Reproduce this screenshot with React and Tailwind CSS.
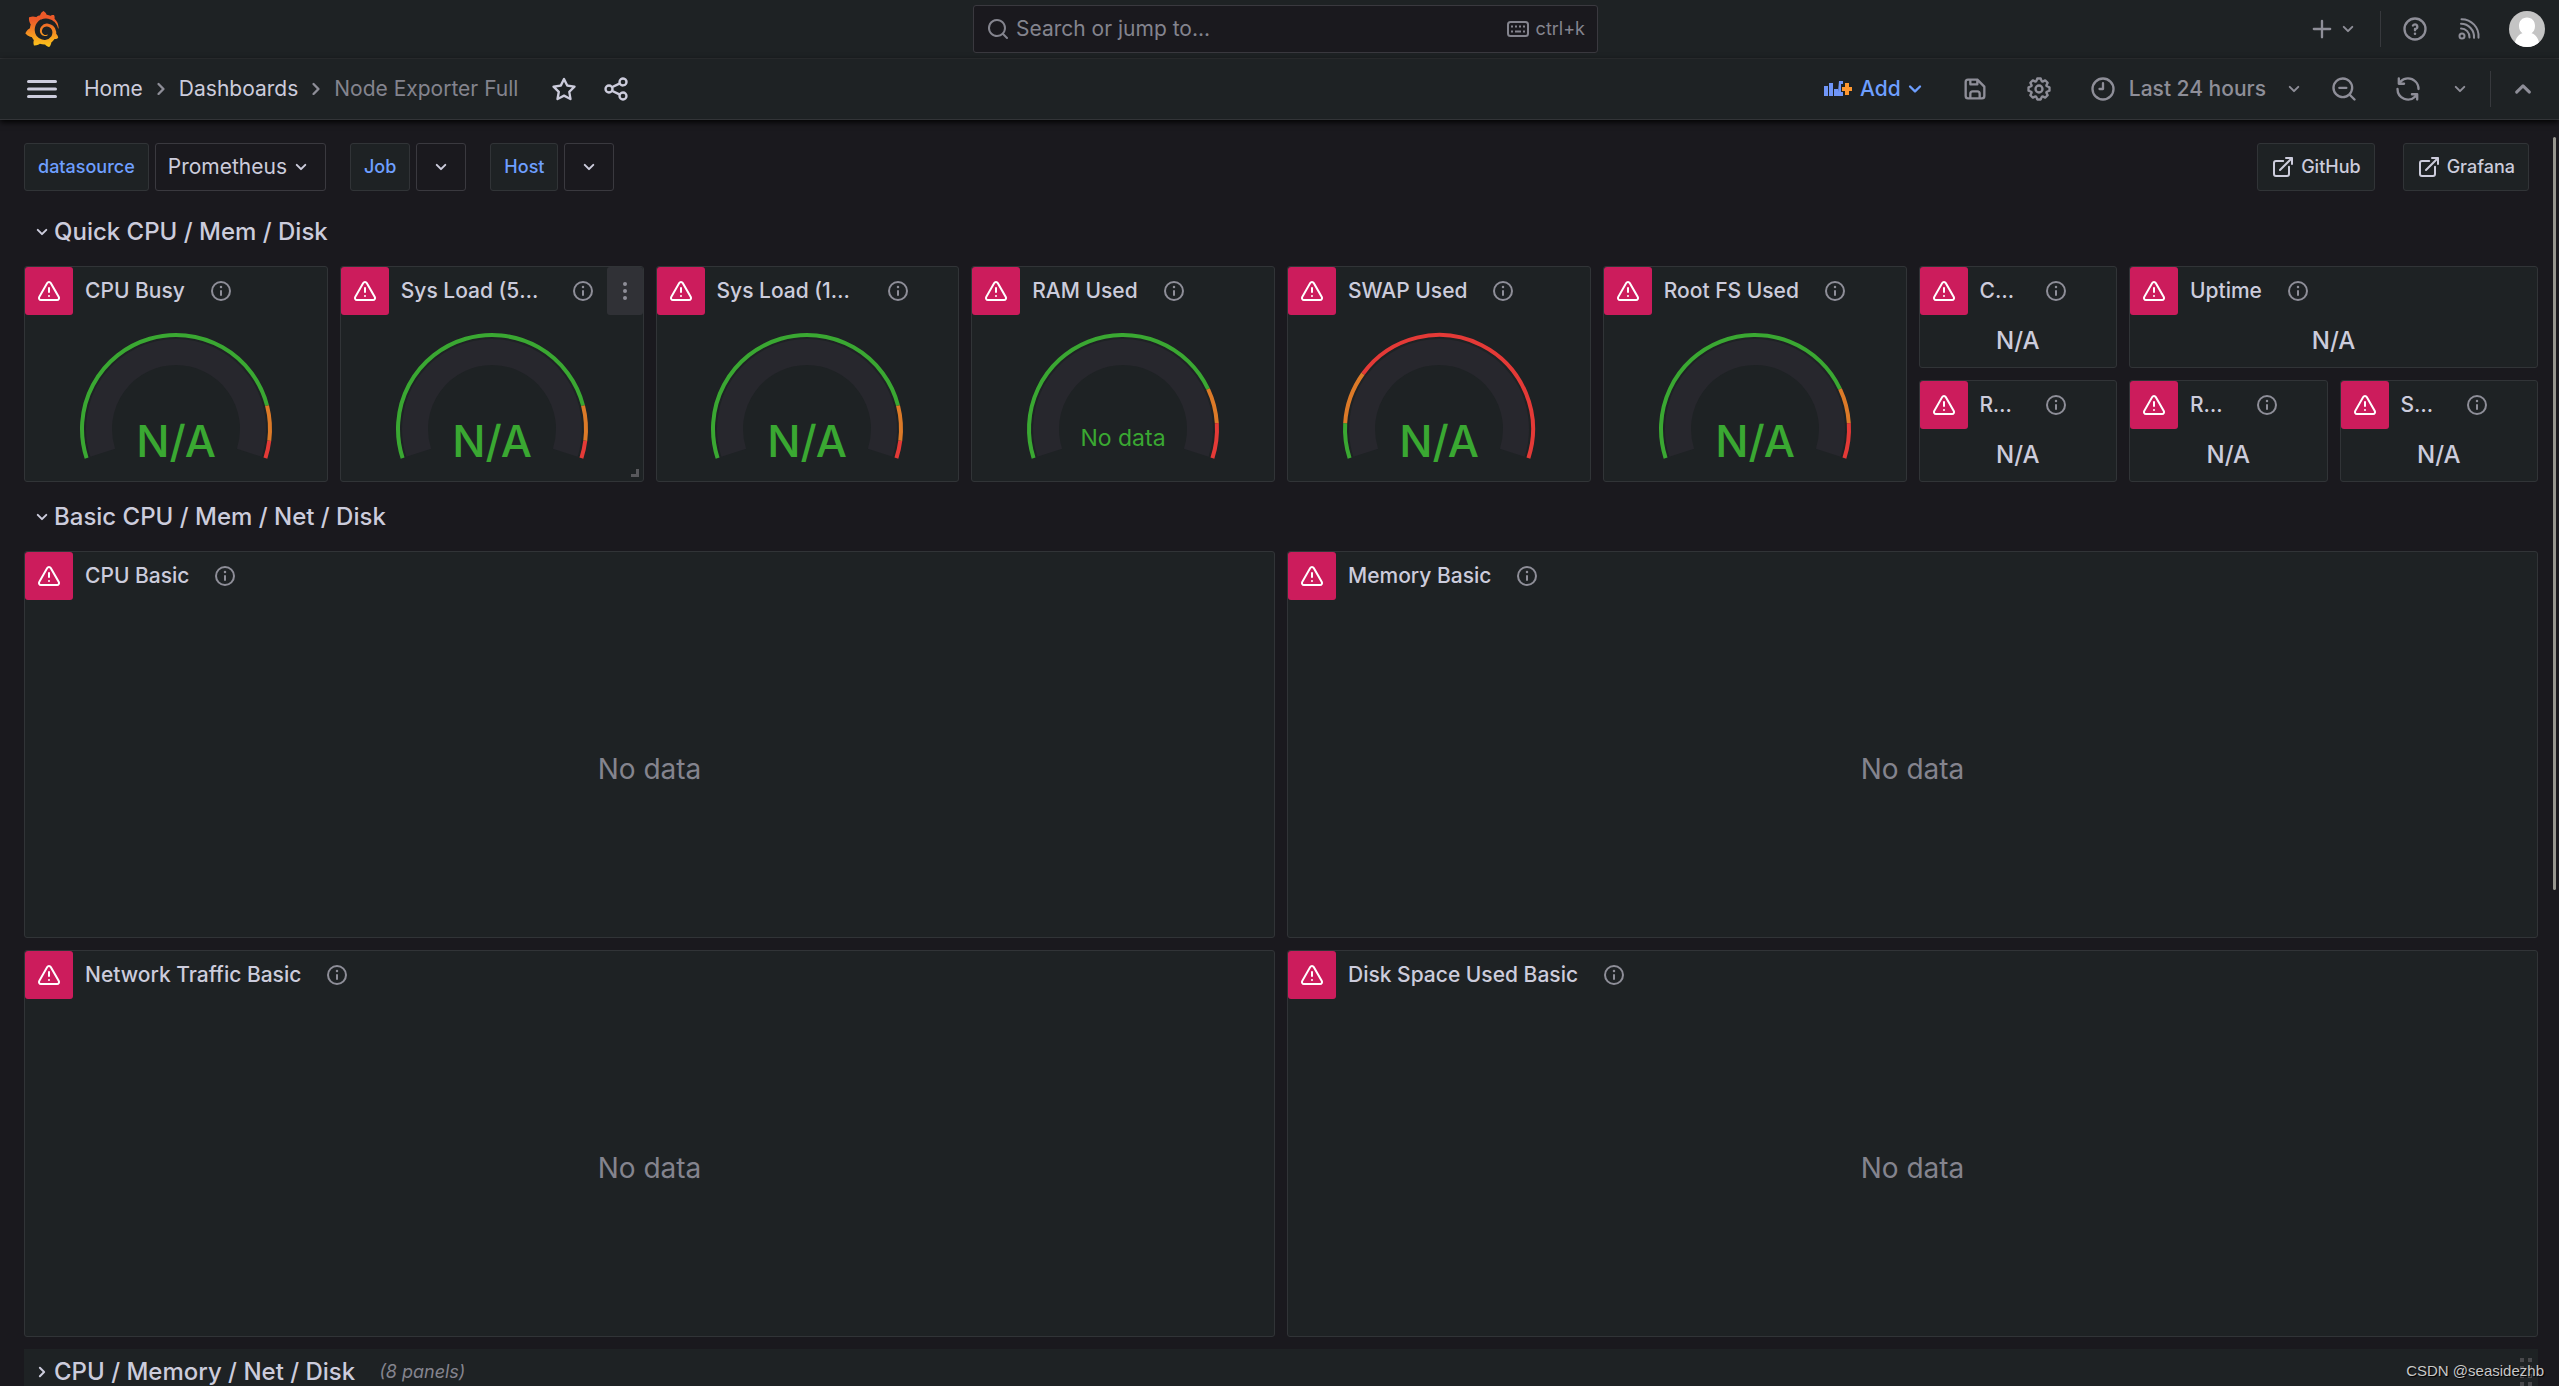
import { SiGrafana } from 'react-icons/si'

const ICONS = {
  info: 'M12,2A10,10,0,1,0,22,12,10,10,0,0,0,12,2Zm0,18a8,8,0,1,1,8-8A8,8,0,0,1,12,20Zm0-9a1,1,0,0,0-1,1v4a1,1,0,0,0,2,0V12A1,1,0,0,0,12,11Zm0-4.25a1.25,1.25,0,1,0,1.25,1.25A1.25,1.25,0,0,0,12,6.75Z',
  warning:
    'M12,16a1,1,0,1,0,1,1A1,1,0,0,0,12,16Zm10.67,1.47-8.05-14a3,3,0,0,0-5.24,0l-8,14A3,3,0,0,0,3.94,22H20.06a3,3,0,0,0,2.61-4.53Zm-1.73,2a1,1,0,0,1-.88.51H3.94a1,1,0,0,1-.88-.51,1,1,0,0,1,0-1l8-14a1,1,0,0,1,1.78,0l8.05,14A1,1,0,0,1,20.94,19.49ZM12,8a1,1,0,0,0-1,1v4a1,1,0,0,0,2,0V9A1,1,0,0,0,12,8Z',
  search:
    'M21.71,20.29,18,16.61A9,9,0,1,0,16.61,18l3.68,3.68a1,1,0,0,0,1.42,0A1,1,0,0,0,21.71,20.29ZM11,18a7,7,0,1,1,7-7A7,7,0,0,1,11,18Z',
  zoomOut:
    'M21.71,20.29,18,16.61A9,9,0,1,0,16.61,18l3.68,3.68a1,1,0,0,0,1.42,0A1,1,0,0,0,21.71,20.29ZM11,18a7,7,0,1,1,7-7A7,7,0,0,1,11,18ZM14,10H8a1,1,0,0,0,0,2h6a1,1,0,0,0,0-2Z',
  down: 'M17,9.17a1,1,0,0,0-1.41,0L12,12.71,8.46,9.17a1,1,0,0,0-1.41,0,1,1,0,0,0,0,1.42l4.24,4.24a1,1,0,0,0,1.42,0L17,10.59A1,1,0,0,0,17,9.17Z',
  up: 'M17,13.41,12.71,9.17a1,1,0,0,0-1.42,0L7.05,13.41a1,1,0,0,0,0,1.42,1,1,0,0,0,1.41,0L12,11.29l3.54,3.54a1,1,0,0,0,.7.29,1,1,0,0,0,.71-.29A1,1,0,0,0,17,13.41Z',
  right:
    'M14.83,11.29,10.59,7.05a1,1,0,0,0-1.42,0,1,1,0,0,0,0,1.41L12.71,12,9.17,15.54a1,1,0,0,0,0,1.41,1,1,0,0,0,.71.29,1,1,0,0,0,.71-.29l4.24-4.24A1,1,0,0,0,14.83,11.29Z',
  clock:
    'M12,6a1,1,0,0,0-1,1v4H9a1,1,0,0,0,0,2h3a1,1,0,0,0,1-1V7A1,1,0,0,0,12,6Zm0-4A10,10,0,1,0,22,12,10,10,0,0,0,12,2Zm0,18a8,8,0,1,1,8-8A8,8,0,0,1,12,20Z',
  save: 'M20.71,9.29l-6-6a1,1,0,0,0-.32-.21A1.09,1.09,0,0,0,14,3H6A3,3,0,0,0,3,6V18a3,3,0,0,0,3,3H18a3,3,0,0,0,3-3V10A1,1,0,0,0,20.71,9.29ZM9,5h4V7H9Zm6,14H9V16a1,1,0,0,1,1-1h4a1,1,0,0,1,1,1Zm4-1a1,1,0,0,1-1,1H17V16a3,3,0,0,0-3-3H10a3,3,0,0,0-3,3v3H6a1,1,0,0,1-1-1V6A1,1,0,0,1,6,5H7V8A1,1,0,0,0,8,9h6a1,1,0,0,0,1-1V6.41l4,4Z',
  cog: 'M21.32,9.55l-1.89-.63.89-1.78A1,1,0,0,0,20.13,6L18,3.87a1,1,0,0,0-1.15-.19l-1.78.89-.63-1.89A1,1,0,0,0,13.5,2h-3a1,1,0,0,0-.95.68L8.92,4.57,7.14,3.68A1,1,0,0,0,6,3.87L3.87,6a1,1,0,0,0-.19,1.15l.89,1.78-1.89.63A1,1,0,0,0,2,10.5v3a1,1,0,0,0,.68.95l1.89.63-.89,1.78A1,1,0,0,0,3.87,18L6,20.13a1,1,0,0,0,1.15.19l1.78-.89.63,1.89a1,1,0,0,0,.95.68h3a1,1,0,0,0,.95-.68l.63-1.89,1.78.89A1,1,0,0,0,18,20.13L20.13,18a1,1,0,0,0,.19-1.15l-.89-1.78,1.89-.63A1,1,0,0,0,22,13.5v-3A1,1,0,0,0,21.32,9.55ZM20,12.78l-1.2.4A2,2,0,0,0,17.64,16l.57,1.14-1.1,1.1L16,17.64a2,2,0,0,0-2.79,1.16l-.4,1.2H11.22l-.4-1.2A2,2,0,0,0,8,17.64l-1.14.57-1.1-1.1L6.36,16A2,2,0,0,0,5.2,13.18L4,12.78V11.22l1.2-.4A2,2,0,0,0,6.36,8L5.79,6.89l1.1-1.1L8,6.36A2,2,0,0,0,10.82,5.2l.4-1.2h1.56l.4,1.2A2,2,0,0,0,16,6.36l1.14-.57,1.1,1.1L17.64,8a2,2,0,0,0,1.16,2.79l1.2.4ZM12,8a4,4,0,1,0,4,4A4,4,0,0,0,12,8Zm0,6a2,2,0,1,1,2-2A2,2,0,0,1,12,14Z',
  star: 'M22,9.67A1,1,0,0,0,21.14,9l-5.69-.83L12.9,3a1,1,0,0,0-1.8,0L8.55,8.16,2.86,9a1,1,0,0,0-.81.68,1,1,0,0,0,.25,1l4.13,4-1,5.68A1,1,0,0,0,6.9,21.44L12,18.77l5.1,2.67a.93.93,0,0,0,.46.12,1,1,0,0,0,.59-.19,1,1,0,0,0,.4-1l-1-5.68,4.13-4A1,1,0,0,0,22,9.67Zm-6.15,4a1,1,0,0,0-.29.88l.72,4.2-3.76-2a1.06,1.06,0,0,0-.94,0l-3.76,2,.72-4.2a1,1,0,0,0-.29-.88l-3-3,4.21-.61a1,1,0,0,0,.76-.55L12,5.7l1.88,3.82a1,1,0,0,0,.76.55l4.21.61Z',
  share:
    'M18,14a4,4,0,0,0-3.08,1.48l-5.1-2.35a3.64,3.64,0,0,0,0-2.26l5.1-2.35A4,4,0,1,0,14,6a4.17,4.17,0,0,0,.07.71L8.79,9.14a4,4,0,1,0,0,5.72l5.28,2.43A4.17,4.17,0,0,0,14,18a4,4,0,1,0,4-4ZM18,4a2,2,0,1,1-2,2A2,2,0,0,1,18,4ZM6,14a2,2,0,1,1,2-2A2,2,0,0,1,6,14Zm12,6a2,2,0,1,1,2-2A2,2,0,0,1,18,20Z',
  sync: 'M19.91,15.51H15.38a1,1,0,0,0,0,2h2.4A8,8,0,0,1,4,12a1,1,0,1,0-2,0,10,10,0,0,0,16.88,7.23V21a1,1,0,0,0,2,0V16.5A1,1,0,0,0,19.91,15.51ZM12,2A10,10,0,0,0,5.12,4.77V3a1,1,0,0,0-2,0V7.5a1,1,0,0,0,1,1h4.5a1,1,0,0,0,0-2H6.22A8,8,0,0,1,20,12a1,1,0,0,0,2,0A10,10,0,0,0,12,2Z',
  help: 'M12,15a1.1,1.1,0,1,0,1.1,1.1A1.1,1.1,0,0,0,12,15ZM12,2A10,10,0,1,0,22,12,10,10,0,0,0,12,2Zm0,18a8,8,0,1,1,8-8A8,8,0,0,1,12,20ZM12,7A3,3,0,0,0,9.4,8.5a1,1,0,1,0,1.73,1A1,1,0,0,1,12,9a1,1,0,0,1,0,2,1,1,0,0,0-1,1v1a1,1,0,0,0,2,0v-.18A3,3,0,0,0,12,7Z',
  external:
    'M18,10.82a1,1,0,0,0-1,1V19a1,1,0,0,1-1,1H5a1,1,0,0,1-1-1V8A1,1,0,0,1,5,7h7.18a1,1,0,0,0,0-2H5A3,3,0,0,0,2,8V19a3,3,0,0,0,3,3H16a3,3,0,0,0,3-3V11.82A1,1,0,0,0,18,10.82Zm3.92-8.2a1,1,0,0,0-.54-.54A1,1,0,0,0,21,2H15a1,1,0,0,0,0,2h3.59L8.29,14.29a1,1,0,0,0,0,1.42,1,1,0,0,0,1.42,0L20,5.41V9a1,1,0,0,0,2,0V3A1,1,0,0,0,21.92,2.62Z',
  plus: 'M19,11H13V5a1,1,0,0,0-2,0v6H5a1,1,0,0,0,0,2h6v6a1,1,0,0,0,2,0V13h6a1,1,0,0,0,0-2Z',
}

const GREEN = '#3aa832'
const ORANGE = '#dc7a28'
const RED = '#e43a37'

// threshold stops are percentages of the gauge's range
const GAUGES = [
  { title: 'CPU Busy', stops: [85, 95] },
  { title: 'Sys Load (5m avg)', stops: [85, 95], hovered: true },
  { title: 'Sys Load (15m avg)', stops: [85, 95] },
  { title: 'RAM Used', stops: [80, 90], value: 'No data' },
  { title: 'SWAP Used', stops: [10, 25] },
  { title: 'Root FS Used', stops: [80, 90] },
]

function Icon({ name, className = 'size-7' }) {
  return (
    <svg viewBox="0 0 24 24" fill="currentColor" aria-hidden="true" className={`shrink-0 ${className}`}>
      <path d={ICONS[name]} />
    </svg>
  )
}

function IconButton({ icon, label, className = 'w-9', iconClass }) {
  return (
    <button aria-label={label} className={`flex h-12 shrink-0 items-center justify-center ${className}`}>
      <Icon name={icon} className={iconClass} />
    </button>
  )
}

function Logo() {
  return (
    <a href="#home" aria-label="Grafana" className="shrink-0">
      <svg width="0" height="0" className="absolute">
        <linearGradient id="logo" x1="0" y1="1" x2="0" y2="0">
          <stop offset="0" stopColor="#fcc81a" />
          <stop offset="0.75" stopColor="#ed5a29" />
        </linearGradient>
      </svg>
      <SiGrafana className="size-9" fill="url(#logo)" />
    </a>
  )
}

function TopBar() {
  return (
    <header className="grid h-[59px] grid-cols-[1fr_625px_1fr] items-center border-b border-[#323437] bg-[#1e2224] pr-3 pl-6">
      <Logo />
      <label className="-mt-px flex h-12 items-center rounded-[3px] border border-[#3a393f] bg-[#1a191e] px-3 text-[#84848e]">
        <Icon name="search" className="size-6" />
        <input
          aria-label="Search"
          placeholder="Search or jump to..."
          className="ml-1.5 min-w-0 flex-1 bg-transparent text-[21px] outline-none placeholder:text-[#84848e]"
        />
        <svg viewBox="0 0 24 24" className="size-6" fill="none" stroke="currentColor" strokeWidth="2">
          <rect x="2" y="5" width="20" height="14" rx="2.5" />
          <path d="M5 9.5h2M9 9.5h2M13 9.5h2M17 9.5h2M5 14.5h2M9 14.5h6M17 14.5h2" />
        </svg>
        <span className="ml-1.5 text-lg">ctrl+k</span>
      </label>
      <div className="mr-0.5 flex items-center justify-end text-[#8e8e98]">
        <button aria-label="New" className="flex h-12 items-center">
          <Icon name="plus" className="size-7" />
          <Icon name="down" className="size-6" />
        </button>
        <div className="mr-4 ml-5 h-9 w-px bg-[#37393d]" />
        <IconButton icon="help" label="Help" />
        <button aria-label="News" className="ml-2 flex h-12 w-14 items-center justify-center">
          <svg viewBox="0 0 24 24" className="size-6" fill="none" stroke="currentColor" strokeWidth="2" strokeLinecap="round">
            <circle cx="5" cy="19" r="2.5" />
            <path d="M4 11.500a8.500 8.500 0 0 1 8.500 9M4 6.800a13 13 0 0 1 13 14M4.500 2.200a17 17 0 0 1 17 18.500" />
          </svg>
        </button>
        <button aria-label="Profile" className="ml-3 size-9 overflow-hidden rounded-full">
          <svg viewBox="0 0 36 36">
            <rect width="36" height="36" fill="#c4c4c4" />
            <path d="M18 6.500c5 0 8 3.500 8 8.500 0 3.500-1.500 6-3.500 7.200 4.500 1.300 7.500 5.300 8.300 13.800H5.200c.8-8.500 3.800-12.500 8.300-13.800C11.500 21 10 18.500 10 15c0-5 3-8.500 8-8.500Z" fill="#fff" />
          </svg>
        </button>
      </div>
    </header>
  )
}

function NavBar() {
  return (
    <nav className="relative flex h-[61px] items-center border-b border-[#323437] bg-[#1e2224] px-6 text-[21px] text-[#ccccdc] shadow-[0_2px_6px_#000]">
      <button aria-label="Menu" className="flex size-9 items-center justify-center">
        <svg viewBox="0 0 30 18" className="w-[30px]" fill="none" stroke="currentColor" strokeWidth="3" strokeLinecap="round">
          <path d="M1.500 1.500h27M1.500 9h27M1.500 16.500h27" />
        </svg>
      </button>
      <div className="ml-6 flex items-center gap-1">
        <a href="#home">Home</a>
        <Icon name="right" className="size-7 text-[#8e8e98]" />
        <a href="#dashboards">Dashboards</a>
        <Icon name="right" className="size-7 text-[#8e8e98]" />
        <span className="text-[#84848e]">Node Exporter Full</span>
      </div>
      <IconButton icon="star" label="Star" className="ml-7 w-9" />
      <IconButton icon="share" label="Share" className="ml-4 w-9" />

      <div className="-mr-3 ml-auto flex items-center text-[#8e8e98]">
        <button className="flex h-12 items-center font-medium text-[#6e9fff]">
          <svg viewBox="0 0 28 18" className="mr-2 w-7">
            <path fill="#7096f8" d="M0 6h4v10H0zM5 3h4v13H5zM10 9h4v7h-4zM14 12l1-11h4v3h-2v8h2v4h-5z" />
            <path fill="#ff9830" d="M21 3h4v4h3v4h-3v4h-4v-4h-3V7h3z" />
          </svg>
          Add
          <Icon name="down" />
        </button>
        <IconButton icon="save" label="Save" className="ml-6 w-11" />
        <IconButton icon="cog" label="Settings" className="ml-5 w-11" />
        <button className="ml-7 flex h-12 items-center gap-3 font-medium">
          <Icon name="clock" />
          Last 24 hours
          <Icon name="down" className="ml-1 size-6" />
        </button>
        <IconButton icon="zoomOut" label="Zoom out" className="ml-4 w-11" />
        <IconButton icon="sync" label="Refresh" className="ml-5 w-11" />
        <IconButton icon="down" label="Refresh interval" className="ml-3 w-9" iconClass="size-6" />
        <div className="ml-3 h-9 w-px bg-[#37393d]" />
        <IconButton icon="up" label="Hide toolbar" className="ml-2 w-12" iconClass="size-9" />
      </div>
    </nav>
  )
}

function Variable({ name, value }) {
  return (
    <div className="flex gap-1.5">
      <span className="flex h-12 items-center rounded-[3px] border border-[#313437] bg-[#1e2224] px-[13px] text-lg font-medium text-[#6e9fff]">
        {name}
      </span>
      <button aria-label={name} className="flex h-12 items-center justify-center gap-0.5 rounded-[3px] border border-[#3a393f] px-3 text-[21px]">
        {value}
        <Icon name="down" className="size-6" />
      </button>
    </div>
  )
}

function LinkButton({ children }) {
  return (
    <a
      href={`#${children}`}
      className="flex h-12 items-center gap-1.5 rounded-[3px] border border-[#313437] bg-[#1e2224] px-[13px] text-lg font-medium"
    >
      <Icon name="external" className="size-6" />
      {children}
    </a>
  )
}

function Panel({ title, className, hovered, children }) {
  return (
    <section className={`relative flex min-w-0 flex-col rounded-[3px] border border-[#313437] bg-[#1e2224] ${className}`}>
      <div className="flex h-12 shrink-0 items-center">
        <button aria-label="Panel error" className="flex size-12 shrink-0 items-center justify-center rounded-[3px] bg-[#cc1c5c] text-white">
          <Icon name="warning" className="size-6" />
        </button>
        <h2 className="ml-3 truncate text-[21px] font-medium">{title}</h2>
        <button aria-label="Description" className="mx-6 shrink-0 text-[#8e8e98] last:mr-12">
          <Icon name="info" className="size-6" />
        </button>
        {hovered && (
          <button aria-label="Panel menu" className="-ml-3 flex h-12 w-9 shrink-0 items-center justify-center rounded-[3px] bg-[#303136] text-[#8e8e98]">
            <svg viewBox="0 0 24 24" className="size-6" fill="currentColor">
              <circle cx="12" cy="5" r="2" />
              <circle cx="12" cy="12" r="2" />
              <circle cx="12" cy="19" r="2" />
            </svg>
          </button>
        )}
      </div>
      <div className="flex flex-1 items-center justify-center">{children}</div>
      {hovered && <div className="absolute right-1 bottom-1 size-2 border-r-3 border-b-3 border-[#58585c]" />}
    </section>
  )
}

// angle runs clockwise from the left end of the dial, which spans 216 degrees
function arc(r, from, to) {
  const point = (pct) => {
    const a = ((162 + pct * 2.16) * Math.PI) / 180
    return `${100 + r * Math.cos(a)} ${114 + r * Math.sin(a)}`
  }
  const large = to - from > 83 ? 1 : 0
  return `M${point(from)}A${r} ${r} 0 ${large} 1 ${point(to)}`
}

function Gauge({ stops: [warn, crit], value = 'N/A' }) {
  const small = value !== 'N/A'
  return (
    <svg viewBox="0 0 200 166" className="h-[166px] w-[200px]" fill="none">
      <path d={arc(77, 0, 100)} stroke="#27272d" strokeWidth="26" />
      <path d={arc(94, 0, warn)} stroke={GREEN} strokeWidth="4" />
      <path d={arc(94, warn, crit)} stroke={ORANGE} strokeWidth="4" />
      <path d={arc(94, crit, 100)} stroke={RED} strokeWidth="4" />
      <text x="100" y={small ? 131 : 142} textAnchor="middle" fill={GREEN} fontSize={small ? 23 : 44} fontWeight={small ? 400 : 500}>
        {value}
      </text>
    </svg>
  )
}

function Stat({ title, className }) {
  return (
    <Panel title={title} className={`row-span-2 ${className}`}>
      <span className="text-[24px] leading-[52px] font-medium">N/A</span>
    </Panel>
  )
}

function EmptyPanel({ title }) {
  return (
    <Panel title={title} className="col-span-12 row-span-7">
      <span className="text-[28px] text-[#84848e]">No data</span>
    </Panel>
  )
}

function RowHeader({ title, count }) {
  return (
    <div className={`col-span-24 flex items-center justify-between ${count ? 'bg-[#1e2224]' : ''}`}>
      <button className="flex items-center pl-1.5 text-[24px] font-medium">
        <Icon name={count ? 'right' : 'down'} className="size-6" />
        {title}
        {count && <span className="ml-6 text-lg font-normal text-[#84848e] italic">({count} panels)</span>}
      </button>
      {count && (
        <svg viewBox="0 0 12 28" className="mr-1.5 w-3" fill="#48484b">
          <path d="M0 0h4v4H0zM8 0h4v4H8zM0 8h4v4H0zM8 8h4v4H8zM0 16h4v4H0zM8 16h4v4H8zM0 24h4v4H0zM8 24h4v4H8z" />
        </svg>
      )}
    </div>
  )
}

export default function App() {
  return (
    <div className="relative h-screen overflow-hidden bg-[#1a191e] font-['Inter',sans-serif] text-[#ccccdc]">
      <TopBar />
      <NavBar />
      <main className="px-6 pt-[23px]">
        <div className="mr-1.5 flex h-12 items-center gap-6">
          <Variable name="datasource" value="Prometheus" />
          <Variable name="Job" />
          <Variable name="Host" />
          <div className="ml-auto flex gap-7">
            <LinkButton>GitHub</LinkButton>
            <LinkButton>Grafana</LinkButton>
          </div>
        </div>

        <div className="mt-[18px] -mr-[3px] grid auto-rows-[45px] grid-cols-24 gap-3">
          <RowHeader title="Quick CPU / Mem / Disk" />
          {GAUGES.map((g) => (
            <Panel key={g.title} title={g.title} hovered={g.hovered} className="col-span-3 row-span-4">
              <Gauge stops={g.stops} value={g.value} />
            </Panel>
          ))}
          <Stat title="CPU Cores" className="col-span-2" />
          <Stat title="Uptime" className="col-span-4" />
          <Stat title="RootFS Total" className="col-span-2" />
          <Stat title="RAM Total" className="col-span-2" />
          <Stat title="SWAP Total" className="col-span-2" />

          <RowHeader title="Basic CPU / Mem / Net / Disk" />
          <EmptyPanel title="CPU Basic" />
          <EmptyPanel title="Memory Basic" />
          <EmptyPanel title="Network Traffic Basic" />
          <EmptyPanel title="Disk Space Used Basic" />
          <RowHeader title="CPU / Memory / Net / Disk" count={8} />
        </div>
      </main>

      {/* scrollbar thumb */}
      <div className="absolute top-[137px] right-[3px] h-[753px] w-[3px] rounded bg-[#97968f]" />
      <div className="absolute right-[15px] bottom-1 font-['Liberation_Sans',sans-serif] text-[15px] text-[#c8c8c8] [text-shadow:1px_1px_1px_#000]">
        CSDN @seasidezhb
      </div>
    </div>
  )
}
